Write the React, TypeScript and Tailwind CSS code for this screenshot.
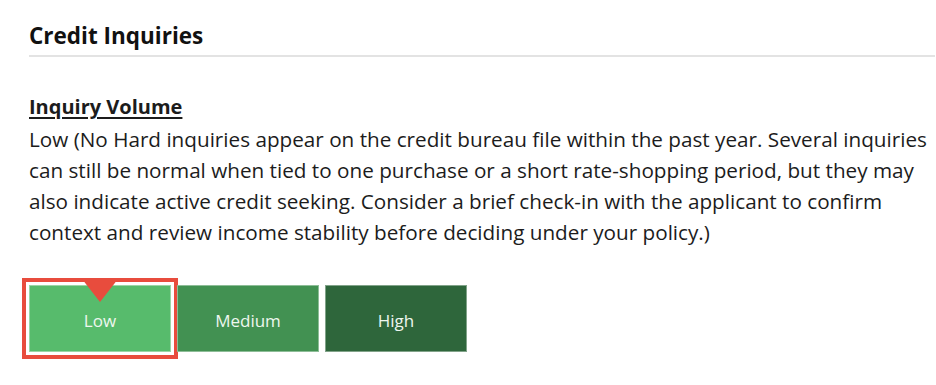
import React from 'react'

interface Level {
  label: string
  bg: string
  selected?: boolean
}

const levels: Level[] = [
  { label: 'Low', bg: 'bg-[#57bb6c]', selected: true },
  { label: 'Medium', bg: 'bg-[#429152]' },
  { label: 'High', bg: 'bg-[#2e663b]' },
]

export default function App() {
  return (
    <div
      className="min-h-[385px] bg-white pl-[29px] pr-px pt-[22px] text-[#1c1c1c]"
      style={{ fontFamily: '"Open Sans", "Noto Sans", sans-serif' }}
    >
      {/* Section title */}
      <h2 className="text-[22.5px] font-bold leading-[28px] text-[#111]">Credit Inquiries</h2>
      <div className="mt-[5px] h-[2px] bg-[#e3e3e3]" />

      {/* Inquiry volume */}
      <h3 className="mt-[34px] text-[20px] font-bold leading-[31px] underline underline-offset-[3px]">
        Inquiry Volume
      </h3>
      <p className="mt-[2px] text-[20.7px] leading-[31px]">
        Low (No Hard inquiries appear on the credit bureau file within the past year. Several inquiries
        can still be normal when tied to one purchase or a short rate-shopping period, but they may
        also indicate active credit seeking. Consider a brief check-in with the applicant to confirm
        context and review income stability before deciding under your policy.)
      </p>

      {/* Level selector */}
      <div className="mt-[37px] flex gap-[6px]">
        {levels.map((level) => (
          <div
            key={level.label}
            className={`relative flex h-[67px] w-[142px] items-center justify-center border border-white/40 pt-[4px] text-[17px] text-[#eef7ef] ${level.bg} ${
              level.selected ? 'outline-4 outline-offset-[3px] outline-[#e84c3d]' : ''
            }`}
          >
            {level.selected && (
              <svg
                className="absolute left-1/2 top-[-7px] -translate-x-1/2"
                width="36"
                height="23"
                viewBox="0 0 36 23"
              >
                <polygon points="0,0 36,0 18,23" fill="#e84c3d" />
              </svg>
            )}
            <span className="relative">{level.label}</span>
          </div>
        ))}
      </div>
    </div>
  )
}
